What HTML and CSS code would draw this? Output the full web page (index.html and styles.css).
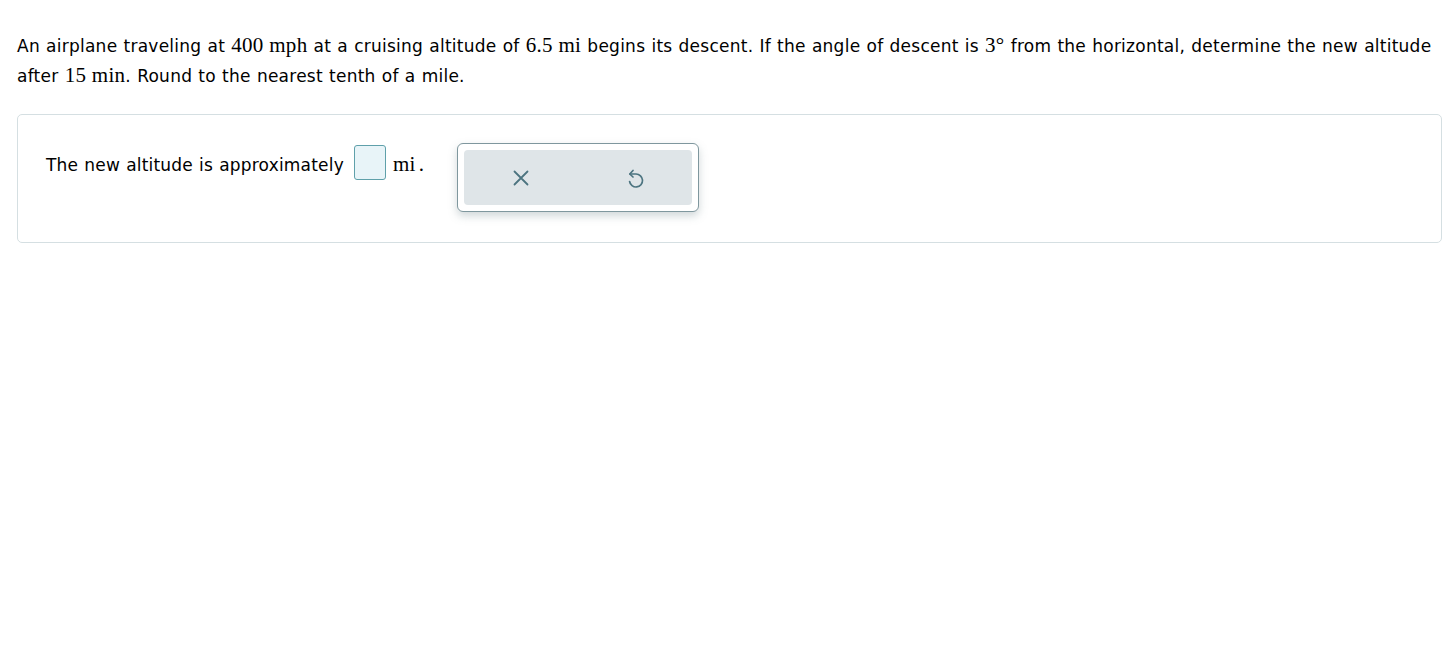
FILE: index.html
```html
<!DOCTYPE html>
<html>
<head>
<meta charset="utf-8">
<link rel="stylesheet" href="styles.css">
</head>
<body>
<div class="page">
  <p class="question">An airplane traveling at <span class="m">400 mph</span> at a cruising altitude of <span class="m">6.5 mi</span> begins its descent. If the angle of descent is <span class="m">3°</span> from the horizontal, determine the new altitude after <span class="m">15 min</span>. Round to the nearest tenth of a mile.</p>
  <div class="card">
    <div class="answer">
      <span class="label">The new altitude is approximately</span>
      <span class="input"></span>
      <span class="m unit">mi</span><span class="dot">.</span>
    </div>
    <div class="toolbar">
      <div class="tools">
        <button class="tool" aria-label="Clear">
          <svg width="16" height="16" viewBox="0 0 16 16"><path d="M1.5 1.5 L14.5 14.5 M14.5 1.5 L1.5 14.5" stroke="#4c7480" stroke-width="1.8" fill="none" stroke-linecap="round"/></svg>
        </button>
        <button class="tool" aria-label="Undo">
          <svg width="20" height="24" viewBox="0 0 20 24"><path d="M5 8 H11 A6.5 6.5 0 1 1 4.6 15.5" stroke="#4c7480" stroke-width="1.7" fill="none" stroke-linecap="round"/><path d="M8 4.5 L4.8 8 L8 11" stroke="#4c7480" stroke-width="1.7" fill="none" stroke-linecap="round" stroke-linejoin="round"/></svg>
        </button>
      </div>
    </div>
  </div>
</div>
</body>
</html>
```
FILE: styles.css
```css
html, body {
  margin: 0;
  padding: 0;
  background: #ffffff;
}
body {
  font-family: "DejaVu Sans", Verdana, sans-serif;
  color: #000;
}
.page {
  padding: 31px 15px 0 17px;
}
.question {
  margin: 0;
  font-size: 17px;
  letter-spacing: 0.25px;
  word-spacing: 0.5px;
  line-height: 30px;
}
.m {
  font-family: "Liberation Serif", "Times New Roman", serif;
  font-size: 21px;
  letter-spacing: 0.3px;
  word-spacing: 0;
  line-height: 1;
}
.card {
  margin-top: 23px;
  border: 1px solid #d5dfe2;
  border-radius: 5px;
  height: 129px;
  box-sizing: border-box;
  width: 1425px;
  display: flex;
  align-items: flex-start;
  padding: 28px 0 0 28px;
}
.answer {
  display: flex;
  align-items: center;
  font-size: 17px;
  letter-spacing: 0.2px;
  word-spacing: 0.5px;
  padding-top: 2px;
}
.label,
.unit,
.dot {
  padding-top: 4px;
}
.input {
  display: inline-block;
  width: 30px;
  height: 33px;
  border: 1px solid #5fa0aa;
  border-radius: 3px;
  background: #e8f4f8;
  margin-left: 10px;
  margin-right: 7px;
}
.unit {
  font-size: 21px;
}
.dot {
  font-family: "Liberation Serif", serif;
  font-size: 21px;
  margin-left: 3px;
}
.toolbar {
  margin-left: 33px;
  border: 1px solid #7f979e;
  border-radius: 6px;
  padding: 6px;
  background: #fff;
  box-shadow: 0 4px 8px rgba(120, 140, 145, 0.35);
}
.tools {
  display: flex;
  background: #dfe5e8;
  border-radius: 4px;
  width: 228px;
  height: 55px;
}
.tool {
  flex: 1;
  border: none;
  background: transparent;
  display: flex;
  align-items: center;
  justify-content: center;
  padding: 0;
}
```
